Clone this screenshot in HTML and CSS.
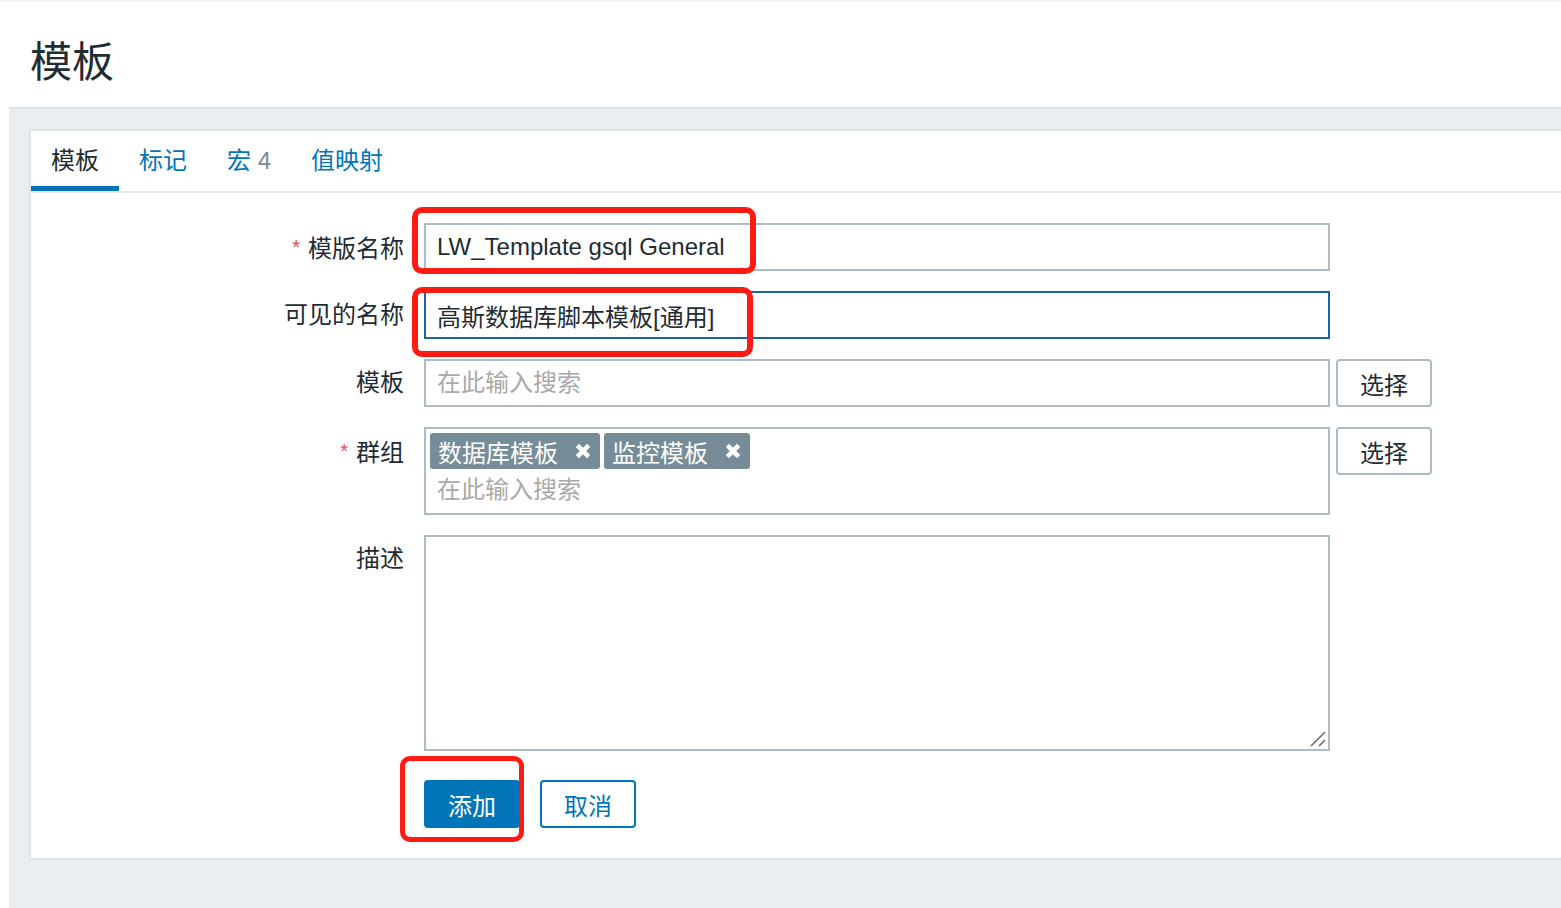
FILE: index.html
```html
<!DOCTYPE html>
<html>

    <head>
        <meta charset="UTF-8">
        <title>模板</title>
        <link rel="stylesheet" href="styles.css">
    </head>

    <body>
        <div class="page">
            <header class="page-header">
                <h1>模板</h1>
            </header>

            <main class="wrapper">
                <div class="form-box">
                    <!-- tab strip -->
                    <ul class="tabs">
                        <li class="tab active"><a>模板</a></li>
                        <li class="tab"><a>标记</a></li>
                        <li class="tab"><a>宏</a> <span class="count">4</span></li>
                        <li class="tab"><a>值映射</a></li>
                    </ul>

                    <form class="form-grid">
                        <label class="label required">模版名称</label>
                        <div class="field">
                            <input class="text-input" type="text" value="LW_Template gsql General">
                        </div>

                        <label class="label">可见的名称</label>
                        <div class="field">
                            <input class="text-input focused" type="text" value="高斯数据库脚本模板[通用]">
                        </div>

                        <label class="label">模板</label>
                        <div class="field">
                            <input class="text-input" type="text" placeholder="在此输入搜索">
                            <button type="button" class="btn-alt">选择</button>
                        </div>

                        <label class="label required">群组</label>
                        <div class="field">
                            <div class="multiselect">
                                <ul class="tags">
                                    <li class="tag">数据库模板
                                        <svg class="tag-remove" viewBox="0 0 16 16"><path d="M3 3 L13 13 M13 3 L3 13"/></svg>
                                    </li>
                                    <li class="tag">监控模板
                                        <svg class="tag-remove" viewBox="0 0 16 16"><path d="M3 3 L13 13 M13 3 L3 13"/></svg>
                                    </li>
                                </ul>
                                <input class="search" type="text" placeholder="在此输入搜索">
                            </div>
                            <button type="button" class="btn-alt">选择</button>
                        </div>

                        <label class="label">描述</label>
                        <div class="field">
                            <div class="textarea-wrap">
                                <textarea class="textarea"></textarea>
                                <svg class="grip" viewBox="0 0 18 18"><path d="M2 16 L16 2 M10 16 L16 10"/></svg>
                            </div>
                        </div>

                        <div></div>
                        <div class="field buttons">
                            <button type="button" class="btn-primary">添加</button>
                            <button type="button" class="btn-secondary">取消</button>
                        </div>
                    </form>
                </div>
            </main>

            <!-- red highlight marks -->
            <div class="mark mark-name"></div>
            <div class="mark mark-visible"></div>
            <div class="mark mark-add"></div>
        </div>
    </body>
</html>
```

FILE: styles.css
```css
* {
    box-sizing: border-box;
}

body {
    margin: 0;
    font-family: "Liberation Sans", "Noto Sans CJK SC", sans-serif;
    color: #1f2c33;
    background-color: #ffffff;
}

.page {
    position: relative;
    min-height: 908px;
    border-top: 2px solid #f2f3f4;
}

.page-header {
    height: 105px;
    padding: 36px 30px 0;
}

.page-header h1 {
    margin: 0;
    font-size: 42px;
    font-weight: normal;
    line-height: 50px;
}

.wrapper {
    display: block;
    margin-left: 9px;
    height: 801px;
    padding: 20px 0 0 20px;
    background-color: #ebeef0;
    border-top: 2px solid #dfe4e7;
}

.form-box {
    background-color: #ffffff;
    border: 2px solid #dfe4e7;
    border-right: none;
    padding-bottom: 30px;
}

/* tabs */
.tabs {
    display: flex;
    margin: 0;
    padding: 0;
    list-style: none;
    border-bottom: 2px solid #e6e9ec;
}

.tab {
    height: 60px;
    padding: 15px 20px 0;
    font-size: 24px;
    line-height: 30px;
    border-bottom: 5px solid transparent;
    color: #0275b8;
}

.tab.active {
    color: #1f2c33;
    border-bottom-color: #0275b8;
}

.tab .count {
    color: #768d99;
}

/* form */
.form-grid {
    display: grid;
    grid-template-columns: 373px 1fr;
    column-gap: 20px;
    row-gap: 20px;
    padding-top: 30px;
}

.label {
    height: 48px;
    text-align: right;
    font-size: 24px;
    line-height: 48px;
    white-space: nowrap;
}

.label.required::before {
    content: "*";
    color: #e54e4e;
    font-size: 20px;
    margin-right: 8px;
    vertical-align: 3px;
}

.field {
    display: flex;
    align-items: flex-start;
    gap: 6px;
}

.text-input {
    display: block;
    width: 906px;
    height: 48px;
    margin: 0;
    padding: 0 11px;
    border: 2px solid #acbbc4;
    border-radius: 0;
    font-family: inherit;
    font-size: 24px;
    color: #1f2c33;
    outline: none;
}

.text-input.focused {
    border-color: #1c64a1;
}

.text-input::placeholder,
.search::placeholder {
    color: #a9a9a9;
}

.btn-alt {
    width: 96px;
    height: 48px;
    margin: 0;
    background-color: #ffffff;
    border: 2px solid #acbbc4;
    border-radius: 4px;
    font-family: inherit;
    font-size: 24px;
    color: #1f2c33;
}

.multiselect {
    width: 906px;
    height: 88px;
    border: 2px solid #acbbc4;
    padding: 4px 4px 0;
}

.tags {
    display: flex;
    gap: 4px;
    margin: 0;
    padding: 0;
    list-style: none;
}

.tag {
    display: flex;
    align-items: center;
    height: 36px;
    padding: 0 8px;
    gap: 16px;
    background-color: #768d99;
    border-radius: 3px;
    color: #ffffff;
    font-size: 24px;
}

.tag-remove {
    width: 18px;
    height: 18px;
    fill: none;
    stroke: #ffffff;
    stroke-width: 4;
}

.search {
    display: block;
    width: 100%;
    height: 42px;
    padding: 0 7px;
    border: none;
    outline: none;
    font-family: inherit;
    font-size: 24px;
}

.textarea-wrap {
    position: relative;
    width: 906px;
    height: 216px;
}

.textarea {
    display: block;
    width: 100%;
    height: 100%;
    margin: 0;
    border: 2px solid #acbbc4;
    border-radius: 0;
    font-family: inherit;
    font-size: 24px;
    outline: none;
    resize: none;
}

/* resize grip in the corner */
.grip {
    position: absolute;
    right: 3px;
    bottom: 3px;
    width: 18px;
    height: 18px;
    fill: none;
    stroke: #6e6e6e;
    stroke-width: 1.6;
}

.buttons {
    gap: 20px;
    margin-top: 9px;
}

.btn-primary,
.btn-secondary {
    width: 96px;
    height: 48px;
    margin: 0;
    border-radius: 4px;
    font-family: inherit;
    font-size: 24px;
}

.btn-primary {
    background-color: #0275b8;
    border: 2px solid #0275b8;
    color: #ffffff;
}

.btn-secondary {
    background-color: #ffffff;
    border: 2px solid #0275b8;
    color: #0275b8;
}

/* red highlight marks */
.mark {
    position: absolute;
    border: 6px solid #ff1a14;
    border-radius: 10px;
}

.mark-name {
    left: 412px;
    top: 205px;
    width: 344px;
    height: 67px;
}

.mark-visible {
    left: 412px;
    top: 285px;
    width: 341px;
    height: 70px;
}

.mark-add {
    left: 400px;
    top: 754px;
    width: 124px;
    height: 86px;
    border-width: 5px;
}
```
